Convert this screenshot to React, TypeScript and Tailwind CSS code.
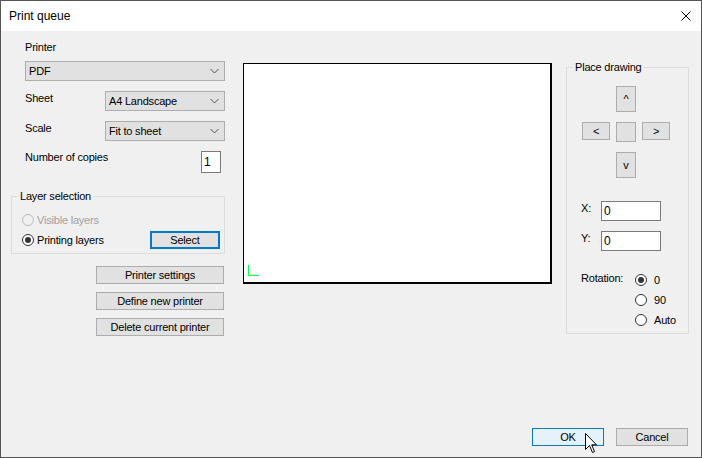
import clsx from 'clsx';

function Chevron() {
  return (
    <svg width="9" height="6" viewBox="0 0 9 6" className="shrink-0">
      <polyline points="0.5,1 4.5,5 8.5,1" fill="none" stroke="#555" strokeWidth="1" />
    </svg>
  );
}

function Combo({ value, className }: { value: string; className: string }) {
  return (
    <div
      className={clsx(
        'h-[20px] flex items-center justify-between pl-[3px] pr-[5px] bg-[#e1e1e1] border border-[#adadad]',
        className
      )}
    >
      <span>{value}</span>
      <Chevron />
    </div>
  );
}

function Button({ label, className, focused }: { label: string; className: string; focused?: boolean }) {
  return (
    <button
      className={clsx(
        'flex items-center justify-center bg-[#e1e1e1]',
        focused ? 'border-2 border-[#0078d7]' : 'border border-[#adadad]',
        className
      )}
    >
      {label}
    </button>
  );
}

function Radio({ label, checked, disabled, gap }: { label: string; checked?: boolean; disabled?: boolean; gap: string }) {
  return (
    <label className={clsx('h-[20px] flex items-center', gap)}>
      <span
        className={clsx(
          'w-[12px] h-[12px] rounded-full border flex items-center justify-center',
          disabled ? 'border-[#bcbcbc] bg-[#f0f0f0]' : 'border-[#333] bg-white'
        )}
      >
        {checked && <span className="w-[6px] h-[6px] rounded-full bg-[#333]" />}
      </span>
      <span className={disabled ? 'text-[#a0a0a0]' : ''}>{label}</span>
    </label>
  );
}

function TextBox({ value, className }: { value: string; className: string }) {
  return (
    <div className={clsx('bg-white border border-[#7a7a7a] flex items-center pl-[2px]', className)}>{value}</div>
  );
}

function ArrowButton({ label, className }: { label: string; className: string }) {
  return (
    <button className={clsx('flex items-center justify-center bg-[#e1e1e1] border border-[#adadad]', className)}>
      {label}
    </button>
  );
}

export default function App() {
  const printerButtons = ['Printer settings', 'Define new printer', 'Delete current printer'];

  return (
    <div className="relative w-[702px] h-[458px] overflow-hidden border border-[#555] bg-[#f0f0f0] flex flex-col text-[11px] leading-[13px] tracking-[-0.2px] text-black font-['Liberation_Sans',Arial,sans-serif]">
      {/* title bar */}
      <div className="h-[30px] shrink-0 bg-white flex items-center justify-between pl-[8px] pr-[10px] text-[12px] tracking-normal">
        <span>Print queue</span>
        <svg width="10" height="10" viewBox="0 0 10 10">
          <path d="M0.5 0.5 L9.5 9.5 M9.5 0.5 L0.5 9.5" stroke="#000" strokeWidth="1" />
        </svg>
      </div>

      <div className="flex-1 flex items-start">
        {/* printer options */}
        <div className="ml-[10px] w-[214px] flex flex-col">
          <span className="mt-[10px] ml-[14px]">Printer</span>
          <Combo value="PDF" className="mt-[7px] ml-[14px] w-[200px]" />

          <div className="mt-[10px] flex items-start justify-between pl-[14px]">
            <span className="pt-[1px]">Sheet</span>
            <Combo value="A4 Landscape" className="w-[120px]" />
          </div>
          <div className="mt-[10px] flex items-start justify-between pl-[14px]">
            <span className="pt-[1px]">Scale</span>
            <Combo value="Fit to sheet" className="w-[120px]" />
          </div>
          <div className="mt-[10px] flex items-start justify-between pl-[14px] pr-[4px]">
            <span>Number of copies</span>
            <TextBox value="1" className="w-[20px] h-[22px] text-[12px]" />
          </div>

          <fieldset className="mt-[17px] border border-[#dcdcdc] pb-[3px]">
            <legend className="ml-[6px] px-[2px]">Layer selection</legend>
            <div className="mt-[7px] pl-[10px] pr-[4px] flex flex-col">
              <Radio label="Visible layers" disabled gap="gap-[3px]" />
              <div className="flex items-center justify-between">
                <Radio label="Printing layers" checked gap="gap-[3px]" />
                <Button label="Select" focused className="w-[70px] h-[18px]" />
              </div>
            </div>
          </fieldset>

          <div className="mt-[12px] mr-[1px] flex flex-col items-end gap-[8px]">
            {printerButtons.map(label => (
              <Button key={label} label={label} className="w-[128px] h-[18px]" />
            ))}
          </div>
        </div>

        {/* sheet preview */}
        <div className="relative ml-[18px] mt-[32px] w-[309px] h-[221px] bg-white border-t border-l border-r-2 border-b-2 border-black">
          <svg width="12" height="12" viewBox="0 0 12 12" className="absolute left-[4px] bottom-[5px]">
            <path d="M0.5 0 L0.5 10.5 L11 10.5" fill="none" stroke="#00ff40" strokeWidth="1" />
          </svg>
        </div>

        {/* placement */}
        <fieldset className="ml-[14px] mt-[30px] w-[123px] border border-[#dcdcdc] pb-[3px]">
          <legend className="ml-[6px] px-[2px]">Place drawing</legend>
          <div className="pl-[15px] flex flex-col items-start">
            <ArrowButton label="^" className="mt-[12px] ml-[34px] w-[20px] h-[26px]" />
            <div className="mt-[10px] flex items-start">
              <ArrowButton label="<" className="w-[28px] h-[18px]" />
              <ArrowButton label="" className="ml-[6px] w-[20px] h-[20px]" />
              <ArrowButton label=">" className="ml-[6px] w-[28px] h-[18px]" />
            </div>
            <ArrowButton label="v" className="mt-[10px] ml-[34px] w-[20px] h-[26px]" />
          </div>

          <div className="mt-[23px] pl-[14px] flex items-start">
            <span className="w-[20px] pt-[1px]">X:</span>
            <TextBox value="0" className="w-[60px] h-[20px] text-[12px]" />
          </div>
          <div className="mt-[10px] pl-[14px] flex items-start">
            <span className="w-[20px] pt-[1px]">Y:</span>
            <TextBox value="0" className="w-[60px] h-[20px] text-[12px]" />
          </div>

          <div className="mt-[19px] pl-[14px] flex items-start">
            <span className="w-[54px] pt-[2px]">Rotation:</span>
            <div className="flex flex-col">
              <Radio label="0" checked gap="gap-[7px]" />
              <Radio label="90" gap="gap-[7px]" />
              <Radio label="Auto" gap="gap-[7px]" />
            </div>
          </div>
        </fieldset>
      </div>

      <div className="shrink-0 flex justify-end gap-[12px] pr-[13px] pb-[11px]">
        <button className="w-[72px] h-[18px] flex items-center justify-center bg-[#e5f1fb] border border-[#0078d7]">
          OK
        </button>
        <Button label="Cancel" className="w-[72px] h-[18px]" />
      </div>

      {/* mouse pointer over OK */}
      <svg width="13" height="21" viewBox="0 0 13 21" className="absolute left-[584px] top-[432px]">
        <path
          d="M0.5 0.5 L0.5 16.5 L4.5 12.5 L7.5 19.5 L9.5 18.5 L6.7 11.8 L11.5 11.8 Z"
          fill="#fff"
          stroke="#000"
          strokeWidth="1"
          strokeLinejoin="miter"
        />
      </svg>
    </div>
  );
}
